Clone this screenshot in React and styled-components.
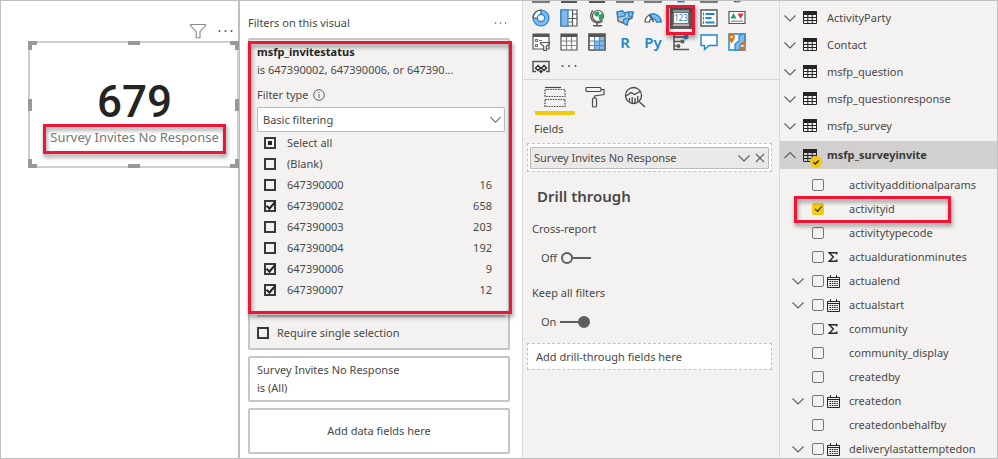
import React from "react";
import styled, { createGlobalStyle, css } from "styled-components";

const c = {
  line: "#c8c6c4",
  frame: "#bfbfbf",
  panel: "#f3f2f1",
  text: "#4a4846",
  dark: "#252423",
  red: "#ee1637",
  yellow: "#f2c811",
  blue: "#1f86c9",
};

const Global = createGlobalStyle`
  *, *::before, *::after { box-sizing: border-box; }
  body { margin: 0; background: #fff; }
  body, button, select, input {
    font-family: "Noto Sans", "Open Sans", sans-serif;
    font-size: 11px;
    color: ${c.text};
  }
  ul { list-style: none; margin: 0; padding: 0; }
  svg { display: block; flex: none; }
`;

const Frame = styled.main`
  display: grid;
  grid-template-columns: 239fr 282fr 258fr 217fr;
  min-height: 100vh;
  border: 1px solid ${c.frame};
  line-height: 18px;
`;

const IconButton = styled.button`
  display: grid;
  place-items: center;
  width: ${(p) => p.$w || 16}px;
  height: ${(p) => p.$h || 16}px;
  flex: none;
  padding: 0;
  border: 0;
  background: none;
`;

const Marker = styled.div`
  position: absolute;
  inset: ${(p) => p.$inset};
  border: 3px solid ${c.red};
  filter: drop-shadow(1px 3px 2px rgba(0, 0, 0, 0.45));
  pointer-events: none;
  z-index: 2;
`;

/* report canvas */

const Canvas = styled.section`
  border-right: 2px solid ${c.frame};
  padding-top: 20px;
`;

const VisualTools = styled.div`
  display: flex;
  justify-content: flex-end;
  align-items: center;
  gap: 10px;
  padding-right: 5px;
  height: 20px;
`;

const VisualCard = styled.article`
  position: relative;
  display: flex;
  flex-direction: column;
  align-items: center;
  height: 127px;
  margin: 0 -1px 0 27px;
  padding: 35px 0 0 2px;
  border: 2px solid #cfcfcf;
`;

const Handle = styled.i`
  position: absolute;
  width: ${(p) => p.$w}px;
  height: ${(p) => p.$h}px;
  border: 0 solid #999;
  ${(p) => p.$at}
`;

const corner = (v, h) => css`
  ${v}: -2px;
  ${h}: -2px;
  border-${v}-width: 4px;
  border-${h}-width: 4px;
`;
const side = (at, middle) => css`
  ${at}: -2px;
  ${middle}: calc(50% - 6px);
  background: #999;
`;

const BigNumber = styled.div`
  font: 500 44px/48px Roboto, sans-serif;
  color: ${c.dark};
`;

const Caption = styled.div`
  position: relative;
  padding: 2px 7px 0;
  font-size: 13px;
  color: #777;
  white-space: nowrap;
`;

/* filters */

const Filters = styled.section`
  padding: 12px 12px 0 8px;
`;

const FiltersHead = styled.header`
  display: flex;
  justify-content: space-between;
  align-items: center;
  height: 20px;
  margin-bottom: 5px;
  padding-right: 2px;
`;

const Title = styled.h2`
  margin: 0;
  font-size: 11px;
  font-weight: 400;
`;

const Card = styled.div`
  position: relative;
  margin-bottom: 6px;
  padding: 3px 3px 0 7px;
  border: 2px solid ${c.line};
  border-radius: 2px;
  background: ${(p) => (p.$active ? c.panel : "#fff")};
  font-size: 11px;
`;

const SummaryCard = styled(Card)`
  padding: 3px 7px;
`;

const AddCard = styled(Card)`
  display: grid;
  place-items: center;
  height: 46px;
  margin: 0;
  padding: 0;
`;

const Strong = styled.div`
  font-weight: 700;
  font-size: 11px;
  color: ${c.dark};
`;

const TypeLabel = styled.label`
  display: flex;
  align-items: center;
  gap: 4px;
  margin-top: 7px;
  height: 18px;
`;

const SelectBox = styled.div`
  display: grid;
  align-items: center;
  justify-items: end;
  margin-top: 3px;
  > * { grid-area: 1 / 1; }
  > svg { margin-right: 4px; pointer-events: none; }
`;

const Select = styled.select`
  appearance: none;
  width: 100%;
  height: 25px;
  padding: 0 5px;
  border: 1px solid #bdbbb9;
  border-radius: 1px;
  background: #fff;
  font-size: 11px;
`;

const Check = styled.input.attrs({ type: "checkbox" })`
  appearance: none;
  position: relative;
  display: grid;
  place-items: center;
  flex: none;
  width: 12px;
  height: 12px;
  margin: 0;
  border: ${(p) => (p.$soft ? "1px solid #777" : "2px solid #3a3938")};
  border-radius: ${(p) => (p.$soft ? 2 : 0)}px;
  ${(p) =>
    p.$soft &&
    css`
      &:checked { background: ${c.yellow}; border-color: ${c.yellow}; }
    `}
  &:checked::after {
    content: "";
    width: ${(p) => (p.$soft ? 7 : 10)}px;
    height: ${(p) => (p.$soft ? 4 : 5)}px;
    border: solid ${c.dark};
    border-width: 0 0 ${(p) => (p.$soft ? 1 : 2)}px ${(p) => (p.$soft ? 1 : 2)}px;
    transform: translateY(-1px) rotate(-48deg);
  }
  ${(p) =>
    p.$partial &&
    css`
      &::after { content: ""; width: 4px; height: 4px; background: ${c.dark}; }
    `}
`;

const Option = styled.li`
  display: flex;
  justify-content: space-between;
  align-items: center;
  height: 21px;
  padding: 0 13px 0 7px;
`;

const OptionLabel = styled.label`
  display: flex;
  align-items: center;
  gap: ${(p) => p.$gap || 11}px;
`;

const SingleRow = styled.div`
  display: flex;
  align-items: center;
  height: 33px;
  margin-top: 15px;
  border-top: 2px solid #bbb;
`;

/* visualizations */

const Visuals = styled.section`
  border-left: 1px solid #dcdad8;
  border-right: 1px solid #dcdad8;
  background: ${c.panel};
`;

const Gallery = styled.div`
  display: grid;
  grid-template-columns: repeat(8, 28px);
  grid-auto-rows: 24px;
  align-content: end;
  height: 79px;
  padding: 0 0 1px 4px;
  overflow: hidden;
  border-bottom: 1px solid #d8d6d4;
`;

const Tile = styled.button`
  position: relative;
  display: grid;
  place-items: center;
  padding: 0;
  border: 0;
  background: none;
  color: ${c.blue};
  font-size: 15px;
  line-height: 18px;
  font-weight: 600;
`;

const Tabs = styled.div`
  display: flex;
  padding-left: 12px;
`;

const Tab = styled.button`
  display: grid;
  place-items: center;
  width: 40px;
  height: 35px;
  padding: 3px 0 0;
  border: 0;
  background: none;
  border-bottom: 4px solid ${(p) => (p.$on ? c.yellow : "transparent")};
  border-radius: 0 0 2px 2px;
`;

const Section = styled.div`
  padding: 0 7px 0 4px;
`;

const Label = styled.div`
  padding-left: ${(p) => p.$indent}px;
  margin-top: ${(p) => p.$top}px;
  font-size: 11px;
`;

const Well = styled.div`
  display: flex;
  align-items: center;
  height: ${(p) => p.$h}px;
  margin-top: ${(p) => p.$top}px;
  padding: ${(p) => p.$pad};
  border: 1px dashed #c4c2c0;
  background: #fff;
  font-size: 11px;
`;

const FieldChip = styled.div`
  display: flex;
  align-items: center;
  flex: 1;
  height: 22px;
  padding-left: 3px;
  border: 1px solid #bdbbb9;
  border-radius: 1px;
  background: #eae9e8;
  > span { flex: 1; }
`;

const Heading = styled.h3`
  margin: 12px 0 0 10px;
  font-size: 15px;
  line-height: 24px;
  font-weight: 600;
`;

const SwitchLabel = styled.label`
  display: flex;
  align-items: center;
  gap: 4px;
  height: 18px;
  margin: 11px 0 0 14px;
  font-size: 11px;
`;

const Switch = styled.input.attrs({ type: "checkbox", role: "switch" })`
  appearance: none;
  display: flex;
  align-items: center;
  width: 30px;
  height: 12px;
  margin: 0;
  background: linear-gradient(#605e5c, #605e5c) ${(p) => (p.defaultChecked ? "left" : "right")} center / 19px 2px no-repeat;
  justify-content: ${(p) => (p.defaultChecked ? "flex-end" : "flex-start")};
  &::after {
    content: "";
    width: 12px;
    height: 12px;
    border: 2px solid #605e5c;
    border-radius: 50%;
    background: ${(p) => (p.defaultChecked ? "#605e5c" : c.panel)};
  }
`;

/* fields */

const Fields = styled.section`
  height: calc(100vh - 2px);
  padding-top: 3px;
  overflow: hidden auto;
  scrollbar-width: none;
  background: ${c.panel};
`;

const TableRow = styled.li`
  display: flex;
  align-items: center;
  height: 27px;
  padding-left: 3px;
  ${(p) =>
    p.$open &&
    css`
      height: 28px;
      margin: 2px 0 4px;
      background: #d2d0ce;
      font-weight: 700;
      color: #3a3938;
    `}
`;

const TableIconBox = styled.span`
  position: relative;
  margin: 0 10px 0 6px;
`;

const Badge = styled.span`
  position: absolute;
  left: 7px;
  top: 7px;
`;

const FieldRow = styled.li`
  position: relative;
  display: flex;
  align-items: center;
  height: 24px;
  padding-left: 12px;
`;

const FieldLabel = styled.label`
  display: flex;
  align-items: center;
  margin-left: 8px;
`;

const Slot = styled.span`
  display: grid;
  place-items: center;
  width: ${(p) => p.$w}px;
  height: 16px;
`;

const FieldName = styled.span`
  margin-left: 7px;
  white-space: nowrap;
`;

/* drawings */

const Chevron = ({ up, w = 12 }) => (
  <svg width={w} height={w} viewBox="0 0 12 12" fill="none" stroke="#605e5c" strokeWidth="1.1">
    <path d={up ? "M.5 9 6 3.5 11.5 9" : "M.5 3.5 6 9l5.5-5.5"} />
  </svg>
);

const Dots = ({ w = 15, r = 1 }) => (
  <svg width={w} height="4" viewBox={`0 0 ${w} 4`} fill="#555">
    <circle cx="1.5" cy="2" r={r} />
    <circle cx={w / 2} cy="2" r={r} />
    <circle cx={w - 1.5} cy="2" r={r} />
  </svg>
);

const Funnel = () => (
  <svg width="18" height="16" viewBox="0 0 18 16" fill="none" stroke="#8a8886" strokeWidth="1.1">
    <path d="M1.5 1.5h15v1L11 8.700v6H7.200v-6L1.500 2.500z" />
  </svg>
);

const Info = () => (
  <svg width="12" height="12" viewBox="0 0 12 12" fill="none" stroke="#605e5c">
    <circle cx="6" cy="6" r="5.300" />
    <path d="M6 5v4M6 3v1" />
  </svg>
);

const TableIcon = () => (
  <svg width="14" height="13" viewBox="0 0 14 13" fill="none" stroke={c.dark}>
    <path d="M0 0h14v4H0z" fill={c.dark} stroke="none" />
    <path d="M.5.500h13v12H.5zM.5 6.500h13M.5 9.500h13M4.800 3v9.500M9.200 3v9.500" />
  </svg>
);

const BadgeIcon = () => (
  <svg width="12" height="12" viewBox="0 0 12 12">
    <circle cx="6" cy="6" r="6" fill={c.yellow} />
    <path d="M3.500 6.200 5.300 8 8.700 4.500" fill="none" stroke={c.dark} strokeWidth="1.300" />
  </svg>
);

const Sigma = () => (
  <svg width="12" height="12" viewBox="0 0 12 12" fill="none" stroke={c.dark} strokeWidth="1.400">
    <path d="M9.800 3.500V1.700H2.200L6.300 6l-4.100 4.300h7.600V8.500" />
  </svg>
);

const Calendar = () => (
  <svg width="13" height="13" viewBox="0 0 13 13" fill="none" stroke={c.dark}>
    <path d="M.5 2.500h12v10H.5zM.5 4.500h12M3.500 0v3M9.500 0v3" />
    <path d="M2.500 6.500h8.500M2.500 8.500h8.500M2.500 10.500h8.500" strokeDasharray="1.500 .8" />
  </svg>
);

const Svg = ({ size = 18, children }) => (
  <svg width={size} height={size} viewBox={`0 0 ${size} ${size}`} fill="none" stroke="#555" strokeWidth="1.200">
    {children}
  </svg>
);

const sky = "#7fb9ee";
const art = {
  stub: <path d="M1 1h16v16H1z" strokeWidth="1.500" />,
  bars: <path d="M1 17h16M3 10v6M7 10v6M11 10v6M15 10v6" strokeWidth="1.800" />,
  bluebars: (
    <>
      <path d="M1 17h16M4 10v6M13 10v6" strokeWidth="1.800" />
      <path d="M8.500 10v6" stroke={c.blue} strokeWidth="2" />
    </>
  ),
  bluestub: <path d="M6 14h6v3H6z" fill={c.blue} stroke={c.blue} />,
  round: <circle cx="9" cy="12" r="5" />,
  donut: (
    <>
      <circle cx="9" cy="9" r="5.700" stroke={sky} strokeWidth="4.400" />
      <path d="M9 3.300A5.700 5.700 0 0 0 3.300 9" stroke="#fff" strokeWidth="4.400" />
      <circle cx="9" cy="9" r="8" stroke={c.blue} />
      <circle cx="9" cy="9" r="3.600" stroke={c.blue} />
      <path d="M1 9a8 8 0 0 1 8-8v4.400M1 9h4.400" />
    </>
  ),
  treemap: (
    <>
      <path d="M1 1h16v16H1z" fill="#fff" />
      <path d="M1 1h7v16H1z" fill={sky} stroke={c.blue} />
      <path d="M8.500 9.500H17M12.500 1v8.500M12.500 5H17M8.500 13h4M12.500 9.500V17" />
    </>
  ),
  globe: (
    <>
      <circle cx="10" cy="7" r="5.500" fill="#fff" />
      <path d="M7 4l3-1 1 2-2 2-2-1zM11 7l3-2 .5 3-2.500 3z" fill="#2f9e62" stroke="#2f9e62" />
      <path d="M5 1.500a7 7 0 1 0 9.500 10.500M9 14v2.500M5 16.800h9" strokeWidth="1.400" />
    </>
  ),
  filled: (
    <>
      <path d="M1 3l5-1 3 2 3-1 5 0-1 6-4 2-1 5-4-2-5-2z" fill="#c8c6c4" />
      <path d="M1 3l5-1 3 2v3L2 8zM8 10l5-1-2 7-4-2zM12 3h5l-1 5-3-1z" fill={sky} stroke={c.blue} />
    </>
  ),
  gauge: (
    <>
      <path d="M1 13a8 8 0 0 1 16 0h-4.500a3.500 3.500 0 0 0-7 0z" fill="#fff" />
      <path d="M5 6a8 8 0 0 1 12 7h-4.500a3.500 3.500 0 0 0-5-3z" fill={sky} stroke={c.blue} />
      <path d="M9.500 13 6 5.500" strokeWidth="1.500" />
    </>
  ),
  card: (
    <>
      <path d="M1.500 1.500h19v19h-19z" fill="#b3b0ad" stroke="#605e5c" strokeWidth="3" />
      <path d="M3.500 5.500h15v11h-15z" fill="#fff" stroke="#777" />
      <text x="11" y="14" textAnchor="middle" fontSize="8" fontWeight="400" fill={c.blue} stroke="none">123</text>
    </>
  ),
  multicard: (
    <>
      <path d="M1 1h16v16H1z" fill="#fff" strokeWidth="1.400" />
      <path d="M3.500 3.500v3M3.500 7.800v3M3.500 12v3" stroke={c.blue} strokeWidth="1.200" />
      <path d="M5.500 5h9M5.500 9h6M5.500 13.500h9" stroke={c.blue} strokeWidth="2" />
    </>
  ),
  kpi: (
    <>
      <path d="M1 2.500h16v12H1z" fill="#fff" />
      <path d="M2.500 9.500 5.500 4l3 5.500z" fill="#2f9e62" stroke="none" />
      <path d="M9.500 4.500h6l-3 5.500z" fill="#d9363e" stroke="none" />
      <path d="M3 12.200h12" stroke="#888" />
    </>
  ),
  slicer: (
    <>
      <path d="M1 1h16v15H1z" fill="#fff" />
      <path d="M1 2.500h16" strokeWidth="3" />
      <path d="M3.500 6.500h2v2h-2zM3.500 11.500h2v2h-2zM7 7.500h3" stroke="#777" />
      <path d="M8.500 9.500h9v1l-3.200 3v4h-2.600v-4l-3.200-3z" fill="#fff" />
    </>
  ),
  table: (
    <>
      <path d="M1 1h16v16H1z" fill="#fff" />
      <path d="M1 2.500h16" strokeWidth="3" />
      <path d="M1 8h16M1 12.500h16M6.500 4v13M11.500 4v13" stroke="#888" />
    </>
  ),
  matrix: (
    <>
      <path d="M1 1h16v16H1z" fill="#fff" />
      <path d="M6.500 8h10v9h-10zM11.500 4h5v4h-5z" fill={sky} stroke="none" />
      <path d="M1 2.500h16" strokeWidth="3" />
      <path d="M1 8h16M1 12.500h16M6.500 4v13M11.500 4v13" stroke="#5c8db8" />
      <path d="M1 1h16v16H1z" />
    </>
  ),
  influencers: (
    <>
      <path d="M2 1v15.500h15" strokeWidth="1.600" />
      <path d="M2 4h11M2 8.500h7M2 13h4" strokeWidth="1.400" />
      <circle cx="14" cy="4" r="2" fill={c.blue} stroke={c.blue} />
      <circle cx="10.500" cy="8.500" r="1.500" fill="#777" />
      <circle cx="6.500" cy="13" r="1.300" fill="#777" />
    </>
  ),
  qna: <path d="M1 2h16v10.500H9L4.500 16.500v-4H1z" fill="#fff" stroke={c.blue} strokeWidth="1.400" />,
  map: (
    <>
      <path d="M1 1h16v16H1z" fill="#fff" stroke={c.blue} strokeWidth="1.400" />
      <path d="M7 17V11l4-3V3l3-2h3v8l-5 3v5z" fill={sky} stroke={c.blue} />
      <path d="M3.500 10.500C1 7 .5 5.500.500 4a3.200 3.200 0 0 1 6.400 0c0 1.500-.9 3-3.400 6.500z" fill="#e2700e" stroke="none" />
      <circle cx="3.700" cy="4" r="1.200" fill="#fff" stroke="none" />
      <circle cx="15.500" cy="10.500" r="1.800" fill="#e2700e" stroke="none" />
      <circle cx="14.500" cy="15.500" r="2.300" fill="#e2700e" stroke="none" />
    </>
  ),
  apps: (
    <>
      <path d="M4 14.500H1v-10h16v10h-3" strokeWidth="1.500" />
      <path d="M6 8.500 8.500 11 6 13.500 3.500 11zM12 8.500l2.500 2.500-2.500 2.500L9.500 11z" stroke="#333" strokeWidth="1.500" />
      <path d="M9 12.500 11 14.500 9 16.500 7 14.500z" fill="#333" stroke="none" />
    </>
  ),
};

const tiles = [
  ["Stacked bar", "stub"], ["Column", "bars"], ["Ribbon", "bluebars"], ["Area", "stub"],
  ["Line", "stub"], ["Waterfall", "bluestub"], ["Funnel", "stub"], ["Pie", "round"],
  ["Donut", "donut"], ["Treemap", "treemap"], ["Map", "globe"], ["Filled map", "filled"],
  ["Gauge", "gauge"], ["Card", "card"], ["Multi-row card", "multicard"], ["KPI", "kpi"],
  ["Slicer", "slicer"], ["Table", "table"], ["Matrix", "matrix"], ["R script", null, "R"],
  ["Python", null, "Py"], ["Key influencers", "influencers"], ["Q&A", "qna"], ["ArcGIS map", "map"],
  ["Power Apps", "apps"],
];

const FieldsIcon = () => (
  <svg width="22" height="22" viewBox="0 0 22 22" fill="none" stroke="#4a4846" strokeWidth="1.200">
    <path d="M1 1.500h16" />
    <path d="M1 3.500h20v7H1zM1 13.500h20v7H1z" strokeDasharray="1.600 1" />
  </svg>
);
const RollerIcon = () => (
  <svg width="20" height="22" viewBox="0 0 20 22" fill="none" stroke="#4a4846" strokeWidth="1.200">
    <rect x="1" y="1.500" width="15" height="4" rx="1" />
    <path d="M16 3.500h3v5l-9.500 1.500v2" />
    <rect x="7.500" y="12" width="4" height="9" rx="1" />
  </svg>
);
const AnalyticsIcon = () => (
  <svg width="22" height="22" viewBox="0 0 22 22" fill="none" stroke="#4a4846" strokeWidth="1.300">
    <circle cx="9.500" cy="9.500" r="8" />
    <path d="m15 15.500 6 5.500M2 10l5-3.500 3.500 2L17 5M5.500 15.500V12M8.200 17v-6M11 17v-5M13.700 15.500V10" />
  </svg>
);
const Close = () => (
  <svg width="10" height="10" viewBox="0 0 10 10" stroke="#605e5c" strokeWidth="1.100">
    <path d="m1 1 8 8M9 1 1 9" />
  </svg>
);

/* data */

const options = [
  { label: "Select all", partial: true },
  { label: "(Blank)" },
  { label: "647390000", count: 16 },
  { label: "647390002", count: 658, on: true },
  { label: "647390003", count: 203 },
  { label: "647390004", count: 192 },
  { label: "647390006", count: 9, on: true },
  { label: "647390007", count: 12, on: true },
];

const tables = ["ActivityParty", "Contact", "msfp_question", "msfp_questionresponse", "msfp_survey", "msfp_surveyinvite"];

const fields = [
  { name: "activityadditionalparams" },
  { name: "activityid", on: true },
  { name: "activitytypecode" },
  { name: "actualdurationminutes", kind: "sum" },
  { name: "actualend", kind: "date" },
  { name: "actualstart", kind: "date" },
  { name: "community", kind: "sum" },
  { name: "community_display" },
  { name: "createdby" },
  { name: "createdon", kind: "date" },
  { name: "createdonbehalfby" },
  { name: "deliverylastattemptedon", kind: "date" },
];

const ReportCanvas = () => (
  <Canvas>
    <VisualTools>
      <IconButton $w={18} aria-label="Filters"><Funnel /></IconButton>
      <IconButton aria-label="More options"><Dots /></IconButton>
    </VisualTools>
    <VisualCard>
      <BigNumber>679</BigNumber>
      <Caption>
        Survey Invites No Response
        <Marker $inset="-2px 0 -8px" />
      </Caption>
      <Handle $w={9} $h={9} $at={corner("top", "left")} />
      <Handle $w={9} $h={9} $at={corner("top", "right")} />
      <Handle $w={9} $h={9} $at={corner("bottom", "left")} />
      <Handle $w={9} $h={9} $at={corner("bottom", "right")} />
      <Handle $w={12} $h={4} $at={side("top", "left")} />
      <Handle $w={12} $h={4} $at={side("bottom", "left")} />
      <Handle $w={4} $h={12} $at={side("left", "top")} />
      <Handle $w={4} $h={12} $at={side("right", "top")} />
    </VisualCard>
  </Canvas>
);

const FilterPane = () => (
  <Filters>
    <FiltersHead>
      <Title>Filters on this visual</Title>
      <IconButton aria-label="Filter options"><Dots w={13} r={0.8} /></IconButton>
    </FiltersHead>
    <Card $active>
      <Strong>msfp_invitestatus</Strong>
      <div>is 647390002, 647390006, or 647390...</div>
      <TypeLabel htmlFor="filter-type">Filter type <Info /></TypeLabel>
      <SelectBox>
        <Select id="filter-type"><option>Basic filtering</option></Select>
        <Chevron w={11} />
      </SelectBox>
      <ul>
        {options.map((o) => (
          <Option key={o.label}>
            <OptionLabel>
              <Check defaultChecked={o.on} $partial={o.partial} />
              {o.label}
            </OptionLabel>
            <span>{o.count}</span>
          </Option>
        ))}
      </ul>
      <SingleRow>
        <OptionLabel $gap={8}><Check />Require single selection</OptionLabel>
      </SingleRow>
      <Marker $inset="1px -4px 34px -2px" />
    </Card>
    <SummaryCard>
      <div>Survey Invites No Response</div>
      <div>is (All)</div>
    </SummaryCard>
    <AddCard>Add data fields here</AddCard>
  </Filters>
);

const VisualsPane = () => (
  <Visuals>
    <Gallery>
      {tiles.map(([name, key, text]) => (
        <Tile key={name} aria-label={name}>
          {text || <Svg size={key === "card" ? 22 : 18}>{art[key]}</Svg>}
          {key === "card" && <Marker $inset="-1px 0 -5px -1px" />}
        </Tile>
      ))}
      <Tile aria-label="Get more visuals"><Dots w={16} /></Tile>
    </Gallery>
    <Tabs>
      <Tab $on aria-label="Fields"><FieldsIcon /></Tab>
      <Tab aria-label="Format"><RollerIcon /></Tab>
      <Tab aria-label="Analytics"><AnalyticsIcon /></Tab>
    </Tabs>
    <Section>
      <Label $indent={7} $top={5}>Fields</Label>
      <Well $h={29} $top={5} $pad="0 2px">
        <FieldChip>
          <span>Survey Invites No Response</span>
          <IconButton aria-label="Field menu"><Chevron /></IconButton>
          <IconButton aria-label="Remove field"><Close /></IconButton>
        </FieldChip>
      </Well>
      <Heading>Drill through</Heading>
      <Label $indent={5} $top={12}>Cross-report</Label>
      <SwitchLabel>Off <Switch /></SwitchLabel>
      <Label $indent={5} $top={17}>Keep all filters</Label>
      <SwitchLabel>On <Switch defaultChecked /></SwitchLabel>
      <Well $h={27} $top={12} $pad="0 8px">Add drill-through fields here</Well>
    </Section>
  </Visuals>
);

const FieldsPane = () => (
  <Fields>
    <ul>
      {tables.map((name) => {
        const open = name === "msfp_surveyinvite";
        return (
          <TableRow key={name} $open={open}>
            <IconButton $w={14} aria-label={`Toggle ${name}`}><Chevron up={open} /></IconButton>
            <TableIconBox>
              <TableIcon />
              {open && <Badge><BadgeIcon /></Badge>}
            </TableIconBox>
            {name}
          </TableRow>
        );
      })}
      {fields.map((f) => (
        <FieldRow key={f.name}>
          <Slot $w={12}>
            {f.kind === "date" && <IconButton $w={12} aria-label={`Expand ${f.name}`}><Chevron /></IconButton>}
          </Slot>
          <FieldLabel>
            <Check $soft defaultChecked={f.on} />
            <Slot $w={18}>
              {f.kind === "date" && <Calendar />}
              {f.kind === "sum" && <Sigma />}
            </Slot>
            <FieldName>{f.name}</FieldName>
          </FieldLabel>
          {f.on && <Marker $inset="-1px 46px -2px 14px" />}
        </FieldRow>
      ))}
    </ul>
  </Fields>
);

export default function App() {
  return (
    <>
      <Global />
      <Frame>
        <ReportCanvas />
        <FilterPane />
        <VisualsPane />
        <FieldsPane />
      </Frame>
    </>
  );
}
